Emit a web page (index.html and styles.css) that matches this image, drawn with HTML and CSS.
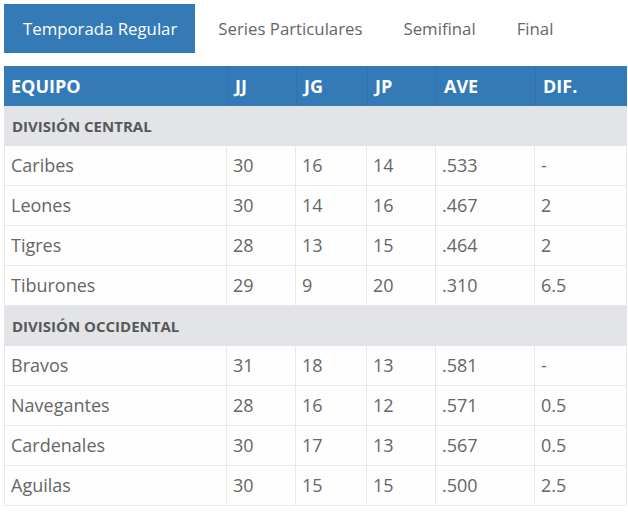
FILE: index.html
```html
<!DOCTYPE html>
<html lang="es">
<head>
<meta charset="utf-8">
<link rel="stylesheet" href="styles.css">
</head>
<body>
<div class="page">
  <ul class="tabs">
    <li class="tab active">Temporada Regular</li>
    <li class="tab">Series Particulares</li>
    <li class="tab">Semifinal</li>
    <li class="tab">Final</li>
  </ul>
  <table class="standings">
    <colgroup>
      <col class="c-team"><col class="c-jj"><col class="c-jg"><col class="c-jp"><col class="c-ave"><col class="c-dif">
    </colgroup>
    <thead>
      <tr><th>EQUIPO</th><th>JJ</th><th>JG</th><th>JP</th><th>AVE</th><th>DIF.</th></tr>
    </thead>
    <tbody>
      <tr class="division"><td colspan="6">DIVISIÓN CENTRAL</td></tr>
      <tr><td>Caribes</td><td>30</td><td>16</td><td>14</td><td>.533</td><td>-</td></tr>
      <tr><td>Leones</td><td>30</td><td>14</td><td>16</td><td>.467</td><td>2</td></tr>
      <tr><td>Tigres</td><td>28</td><td>13</td><td>15</td><td>.464</td><td>2</td></tr>
      <tr><td>Tiburones</td><td>29</td><td>9</td><td>20</td><td>.310</td><td>6.5</td></tr>
      <tr class="division"><td colspan="6">DIVISIÓN OCCIDENTAL</td></tr>
      <tr><td>Bravos</td><td>31</td><td>18</td><td>13</td><td>.581</td><td>-</td></tr>
      <tr><td>Navegantes</td><td>28</td><td>16</td><td>12</td><td>.571</td><td>0.5</td></tr>
      <tr><td>Cardenales</td><td>30</td><td>17</td><td>13</td><td>.567</td><td>0.5</td></tr>
      <tr><td>Aguilas</td><td>30</td><td>15</td><td>15</td><td>.500</td><td>2.5</td></tr>
    </tbody>
  </table>
</div>
</body>
</html>
```
FILE: styles.css
```css
html, body {
  margin: 0;
  padding: 0;
  background: #fff;
}
body {
  font-family: "Open Sans", "Noto Sans", sans-serif;
  color: #666;
}
.page {
  padding: 4px 1px 0 4px;
}
.tabs {
  list-style: none;
  margin: 0 0 13px 0;
  padding: 0;
  display: flex;
}
.tab {
  height: 49px;
  line-height: 49px;
  font-size: 16.8px;
  color: #666;
  padding: 0 18px 0 19px;
  margin-right: 4px;
}
.tab.active {
  background: #337ab7;
  color: #fff;
}
.standings {
  width: 623px;
  border-collapse: separate;
  border-spacing: 0;
  table-layout: fixed;
}
.c-team { width: 223px; }
.c-jj { width: 69px; }
.c-jg { width: 71px; }
.c-jp { width: 69px; }
.c-ave { width: 99px; }
.c-dif { width: 92px; }
.standings th,
.standings td {
  box-sizing: border-box;
  height: 40px;
  text-align: left;
  vertical-align: middle;
}
.standings th {
  background: #337ab7;
  color: #fff;
  font-weight: 700;
  font-size: 18px;
  padding: 0 7px;
  border-left: 1px solid #2f72ad;
}
.standings th:first-child { border-left: none; }
.standings td {
  padding: 0 6px 1px;
  font-size: 18px;
  color: #666;
  background: #fefefe;
  border-right: 1px solid #e8e8e8;
  border-bottom: 1px solid #e8e8e8;
}
.standings td:first-child { border-left: 1px solid #e8e8e8; }
.standings tr.division td {
  background: #e2e4e7;
  color: #585858;
  font-weight: 700;
  font-size: 15px;
  padding: 1px 7px 0;
  border-color: #e2e4e7;
}
```
